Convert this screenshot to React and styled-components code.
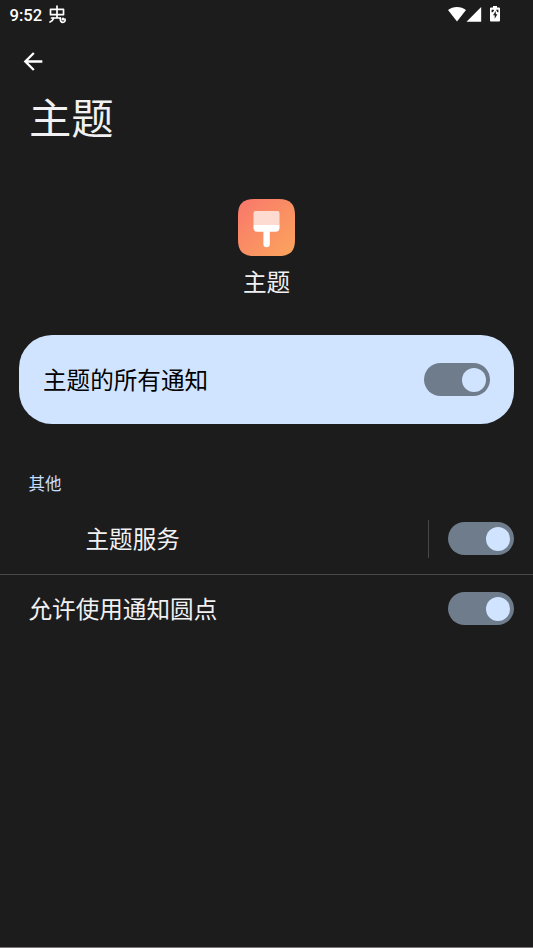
import React, { useState } from "react";
import styled, { createGlobalStyle } from "styled-components";

const GlobalStyle = createGlobalStyle`
  body {
    margin: 0;
    background: #1c1c1c;
  }
`;

const Screen = styled.div`
  box-sizing: border-box;
  display: flex;
  flex-direction: column;
  width: 533px;
  height: 948px;
  background: #1c1c1c;
  border-bottom: 1px solid #7b7678;
  color: #f1f1f3;
  font-family: Roboto, "Noto Sans CJK SC", sans-serif;
  overflow: hidden;
`;

const StatusBar = styled.header`
  box-sizing: border-box;
  display: flex;
  justify-content: space-between;
  height: 30px;
  padding: 0 33px 0 9.5px;
`;

const StatusGroup = styled.div`
  display: flex;
  align-items: flex-start;

  svg {
    flex: none;
  }
`;

const Clock = styled.span`
  margin-right: 7px;
  font-size: 16.6px;
  font-weight: 500;
  line-height: 31px;
  color: #ffffff;
`;

const BackButton = styled.button`
  display: flex;
  width: 28px;
  height: 28px;
  margin: 17px 0 0 19px;
  padding: 0;
  border: 0;
  background: none;
  color: #ffffff;
`;

const Title = styled.h1`
  margin: 14px 0 0 29px;
  font-size: 42.3px;
  font-weight: 400;
  line-height: 62px;
`;

const AppInfo = styled.section`
  display: flex;
  flex-direction: column;
  align-items: center;
  margin-top: 48px;
`;

const AppName = styled.div`
  margin-top: 10px;
  font-size: 23.6px;
  line-height: 34px;
`;

const MainSwitch = styled.section`
  box-sizing: border-box;
  display: flex;
  align-items: center;
  justify-content: space-between;
  height: 89px;
  margin: 35px 19px 0;
  padding: 0 24px;
  border-radius: 33px;
  background: #d0e4ff;
  color: #000000;
`;

const Label = styled.span`
  padding-top: 3px;
  font-size: 23.6px;
  line-height: 34px;
`;

const Category = styled.h2`
  margin: 49px 0 0 28.5px;
  font-size: 16.5px;
  font-weight: 400;
  line-height: 24px;
  color: #c8deff;
`;

const List = styled.div`
  margin-top: 6px;
`;

const Row = styled.div`
  box-sizing: border-box;
  display: flex;
  align-items: center;
  justify-content: space-between;
  height: ${(props) => props.$height};
  padding: 0 19px 0 ${(props) => (props.$indent ? "85.5px" : "28.5px")};
`;

const SwitchArea = styled.div`
  display: flex;
  align-items: center;
  height: 38px;
  padding-left: 19px;
  border-left: 1px solid #484848;
`;

const Divider = styled.div`
  height: 1px;
  background: #484848;
`;

const Track = styled.button`
  box-sizing: border-box;
  display: flex;
  align-items: center;
  justify-content: ${(props) => (props.$on ? "flex-end" : "flex-start")};
  width: 66px;
  height: 33px;
  padding: 0 4.5px;
  border: 0;
  border-radius: 17px;
  background: #6f7c8c;
`;

const Thumb = styled.span`
  width: 24px;
  height: 24px;
  border-radius: 50%;
  background: #d0e4ff;
`;

const Switch = () => {
  const [on, setOn] = useState(true);

  return (
    <Track $on={on} role="switch" aria-checked={on} onClick={() => setOn(!on)}>
      <Thumb />
    </Track>
  );
};

const BugIcon = () => (
  <svg
    width="18"
    height="26"
    viewBox="0 0 18 26"
    fill="none"
    stroke="#ffffff"
    strokeWidth="1.7"
    strokeLinecap="round"
    strokeLinejoin="round"
  >
    <path d="M8 6v11.500M1.500 9.300h13v5.400h-13zM2.500 18h8.800" />
    <path d="M4.500 18.200c-.4 1.800-1.500 3-3.500 3.800M11.300 18c-.2 2.800.8 4.300 2.600 4.300 1.700 0 2.500-1.400 2.100-3.100" />
    <circle cx="14" cy="19" r="0.700" />
  </svg>
);

const WifiIcon = () => (
  <svg width="18" height="22" viewBox="0 0 18 22" fill="#ffffff">
    <path d="M9 21.500 0 10.100C2.600 8.100 5.600 7 9 7s6.400 1.100 9 3.100z" />
  </svg>
);

const SignalIcon = () => (
  <svg width="16" height="22" viewBox="0 0 16 22" fill="#ffffff">
    <path d="M.5 21.700 15.200 7v14.700z" />
  </svg>
);

const BatteryIcon = () => (
  <svg width="18" height="22" viewBox="0 0 18 22">
    <path
      fill="#ffffff"
      d="M11 6h4v1.500h2a1 1 0 0 1 1 1v12a1 1 0 0 1-1 1H9a1 1 0 0 1-1-1v-12a1 1 0 0 1 1-1h2z"
    />
    <path
      fill="#1c1c1c"
      d="M13.800 11 11 15.300h1.700v3.400l2.700-4.500h-1.600zM9.600 9.700h2.200v1.200l-1.200 1.300h-1zM14 9.700h2.400v2.500h-1z"
    />
  </svg>
);

const BackIcon = () => (
  <svg width="29" height="29" viewBox="0 0 24 24" fill="currentColor">
    <path d="M20 11H7.830l5.590-5.590L12 4l-8 8 8 8 1.410-1.410L7.830 13H20v-2z" />
  </svg>
);

const ThemeIcon = () => (
  <svg width="57" height="57" viewBox="0 0 57 57">
    <defs>
      <linearGradient id="themeFill" x1="0" y1="0" x2="1" y2="1">
        <stop offset="0" stopColor="#f9776b" />
        <stop offset="1" stopColor="#fba55d" />
      </linearGradient>
    </defs>
    <path
      fill="url(#themeFill)"
      d="M16 0h25c11 0 16 5 16 16v25c0 11-5 16-16 16H16C5 57 0 52 0 41V16C0 5 5 0 16 0z"
    />
    <path
      fill="#fddbd1"
      d="M17.500 12h22a2 2 0 0 1 2 2v12.500h-26V14a2 2 0 0 1 2-2z"
    />
    <path
      fill="#ffffff"
      d="M15.500 26h26v2.800a4 4 0 0 1-4 4h-5.700V45a3.200 3.200 0 0 1-6.400 0V32.800h-5.900a4 4 0 0 1-4-4z"
    />
  </svg>
);

const App = () => {
  return (
    <>
      <GlobalStyle />
      <Screen>
        <StatusBar>
          <StatusGroup>
            <Clock>9:52</Clock>
            <BugIcon />
          </StatusGroup>
          <StatusGroup>
            <WifiIcon />
            <SignalIcon />
            <BatteryIcon />
          </StatusGroup>
        </StatusBar>
        <BackButton aria-label="返回">
          <BackIcon />
        </BackButton>
        <Title>主题</Title>
        <AppInfo>
          <ThemeIcon />
          <AppName>主题</AppName>
        </AppInfo>
        <MainSwitch>
          <Label>主题的所有通知</Label>
          <Switch />
        </MainSwitch>
        <Category>其他</Category>
        <List>
          <Row $indent $height="71px">
            <Label>主题服务</Label>
            <SwitchArea>
              <Switch />
            </SwitchArea>
          </Row>
          <Divider />
          <Row $height="67px">
            <Label>允许使用通知圆点</Label>
            <Switch />
          </Row>
        </List>
      </Screen>
    </>
  );
};

export default App;
